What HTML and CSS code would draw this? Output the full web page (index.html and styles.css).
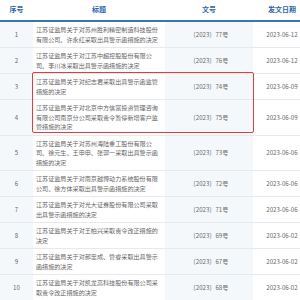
FILE: index.html
```html
<!DOCTYPE html>
<html lang="zh">
<head>
<meta charset="utf-8">
<link rel="stylesheet" href="styles.css">
</head>
<body>
<div class="wrap">
<table class="list">
<colgroup><col class="c1"><col class="c2"><col class="c3"><col class="c4"></colgroup>
<thead>
<tr><th>序号</th><th>标题</th><th>文号</th><th>发文日期</th></tr>
</thead>
<tbody>
<tr><td class="no">1</td><td class="title">江苏证监局关于对苏州胜利精密制造科技股份有限公司、许永红采取出具警示函措施的决定</td><td class="code">〔2023〕77号</td><td class="date">2023-06-12</td></tr>
<tr><td class="no">2</td><td class="title">江苏证监局关于对江苏中超控股股份有限公司、李川冰采取出具警示函措施的决定</td><td class="code">〔2023〕76号</td><td class="date">2023-06-12</td></tr>
<tr><td class="no">3</td><td class="title">江苏证监局关于对纪志君采取出具警示函监管措施的决定</td><td class="code">〔2023〕74号</td><td class="date">2023-06-09</td></tr>
<tr><td class="no">4</td><td class="title">江苏证监局关于对北京中方信富投资管理咨询有限公司南京分公司采取责令暂停新增客户监管措施的决定</td><td class="code">〔2023〕75号</td><td class="date">2023-06-09</td></tr>
<tr><td class="no">5</td><td class="title">江苏证监局关于对苏州海陆重工股份有限公司、徐元生、王申申、张郭一采取出具警示函措施的决定</td><td class="code">〔2023〕73号</td><td class="date">2023-06-06</td></tr>
<tr><td class="no">6</td><td class="title">江苏证监局关于对南京越博动力系统股份有限公司、徐方体采取出具警示函措施的决定</td><td class="code">〔2023〕72号</td><td class="date">2023-06-06</td></tr>
<tr><td class="no">7</td><td class="title">江苏证监局关于对光大证券股份有限公司采取出具警示函措施的决定</td><td class="code">〔2023〕71号</td><td class="date">2023-06-06</td></tr>
<tr><td class="no">8</td><td class="title">江苏证监局关于对王柏兴采取责令改正措施的决定</td><td class="code">〔2023〕69号</td><td class="date">2023-06-02</td></tr>
<tr><td class="no">9</td><td class="title">江苏证监局关于对郝忠成、管睿采取出具警示函措施的决定</td><td class="code">〔2023〕67号</td><td class="date">2023-06-02</td></tr>
<tr><td class="no">10</td><td class="title">江苏证监局关于对凯龙高科技股份有限公司采取责令改正措施的决定</td><td class="code">〔2023〕68号</td><td class="date">2023-06-02</td></tr>
</tbody>
</table>
<div class="highlight"></div>
</div>
</body>
</html>
```
FILE: styles.css
```css
html, body {
  margin: 0;
  padding: 0;
  overflow: hidden;
  background: #fff;
}
.wrap {
  position: relative;
  width: 311px;
}
.list {
  width: 311px;
  border-collapse: collapse;
  table-layout: fixed;
  font-family: "Noto Sans CJK SC", "Noto Sans", sans-serif;
  font-size: 6.1px;
  line-height: 9.5px;
  color: #666;
}
.c1 { width: 33px; }
.c2 { width: 132px; }
.c3 { width: 88px; }
.c4 { width: 58px; }
.list th {
  height: 20px;
  padding: 0;
  font-size: 7px;
  font-weight: bold;
  color: #2f66a8;
  text-align: center;
  border-bottom: 2px solid #3b74b6;
  background: #fff;
}
.list td {
  padding: 3px 0;
  border-bottom: 1px solid #e6e9ee;
  vertical-align: middle;
}
.list td.no {
  text-align: center;
  background: #f5f8fb;
}
.list td.title {
  padding-left: 3px;
  padding-right: 5px;
  text-align: left;
}
.list td.code {
  text-align: center;
  background: #f5f8fb;
}
.list td.date {
  text-align: center;
}
.highlight {
  position: absolute;
  left: 32px;
  top: 72px;
  width: 220px;
  height: 59px;
  border: 1.5px solid #e8393b;
  border-radius: 2px;
  pointer-events: none;
}
```
